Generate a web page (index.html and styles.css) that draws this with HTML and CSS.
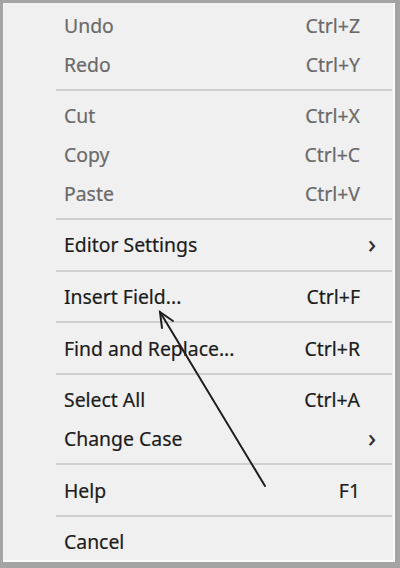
FILE: index.html
```html
<!DOCTYPE html>
<html lang="en">
<head>
  <meta charset="UTF-8">
  <meta name="viewport" content="width=device-width, initial-scale=1.0">
  <title>Context Menu</title>
  <link rel="stylesheet" href="styles.css">
</head>
<body>
  <div class="menu">
    <div class="item disabled"><span class="label">Undo</span><span class="key">Ctrl+Z</span><span class="sub"></span></div>
    <div class="item disabled"><span class="label">Redo</span><span class="key">Ctrl+Y</span><span class="sub"></span></div>
    <div class="sep"></div>
    <div class="item disabled"><span class="label">Cut</span><span class="key">Ctrl+X</span><span class="sub"></span></div>
    <div class="item disabled"><span class="label">Copy</span><span class="key">Ctrl+C</span><span class="sub"></span></div>
    <div class="item disabled"><span class="label">Paste</span><span class="key">Ctrl+V</span><span class="sub"></span></div>
    <div class="sep"></div>
    <div class="item"><span class="label">Editor Settings</span><span class="key"></span><span class="sub">&rsaquo;</span></div>
    <div class="sep"></div>
    <div class="item"><span class="label">Insert Field...</span><span class="key">Ctrl+F</span><span class="sub"></span></div>
    <div class="sep"></div>
    <div class="item"><span class="label">Find and Replace...</span><span class="key">Ctrl+R</span><span class="sub"></span></div>
    <div class="sep"></div>
    <div class="item"><span class="label">Select All</span><span class="key">Ctrl+A</span><span class="sub"></span></div>
    <div class="item"><span class="label">Change Case</span><span class="key"></span><span class="sub">&rsaquo;</span></div>
    <div class="sep"></div>
    <div class="item"><span class="label">Help</span><span class="key">F1</span><span class="sub"></span></div>
    <div class="sep"></div>
    <div class="item"><span class="label">Cancel</span><span class="key"></span><span class="sub"></span></div>

    <!-- annotation arrow pointing at Insert Field -->
    <svg class="pointer" width="400" height="568" viewBox="0 0 400 568">
      <g stroke="#1e1e1e" stroke-width="2" fill="none" stroke-linecap="round">
        <line x1="160" y1="312" x2="265" y2="486"/>
        <polyline points="173,321 160,312 162,328"/>
      </g>
    </svg>
  </div>
</body>
</html>
```

FILE: styles.css
```css
body {
  margin: 0;
  padding: 0;
  font-family: "Noto Sans", "Open Sans", Arial, sans-serif;
}

.menu {
  position: relative;
  box-sizing: border-box;
  width: 400px;
  height: 568px;
  background: #f0f0f0;
  border-style: solid;
  border-color: #a4a4a4;
  border-width: 3px 5px 6px 3px;
  box-shadow: inset -2px -2px 0 #fafafa;
  padding-top: 3px;
}

.item {
  display: grid;
  grid-template-columns: 1fr auto 24px;
  align-items: center;
  height: 38.8px;
  padding: 0 11px 0 61px;
  font-size: 19.4px;
  color: #1c1c1c;
  -webkit-text-stroke: 0.2px currentColor;
}

.item.disabled {
  color: #6a6a6a;
}

.label {
  white-space: nowrap;
}

.key {
  white-space: nowrap;
  text-align: right;
}

.sub {
  text-align: center;
  font-size: 26px;
  line-height: 1;
  padding-bottom: 3px;
  color: #2a2a2a;
}

.sep {
  height: 2px;
  margin: 5.4px 3px 5.4px 53px;
  background: #cfcfcf;
}

.pointer {
  position: absolute;
  top: -3px;
  left: -3px;
  pointer-events: none;
}
```
